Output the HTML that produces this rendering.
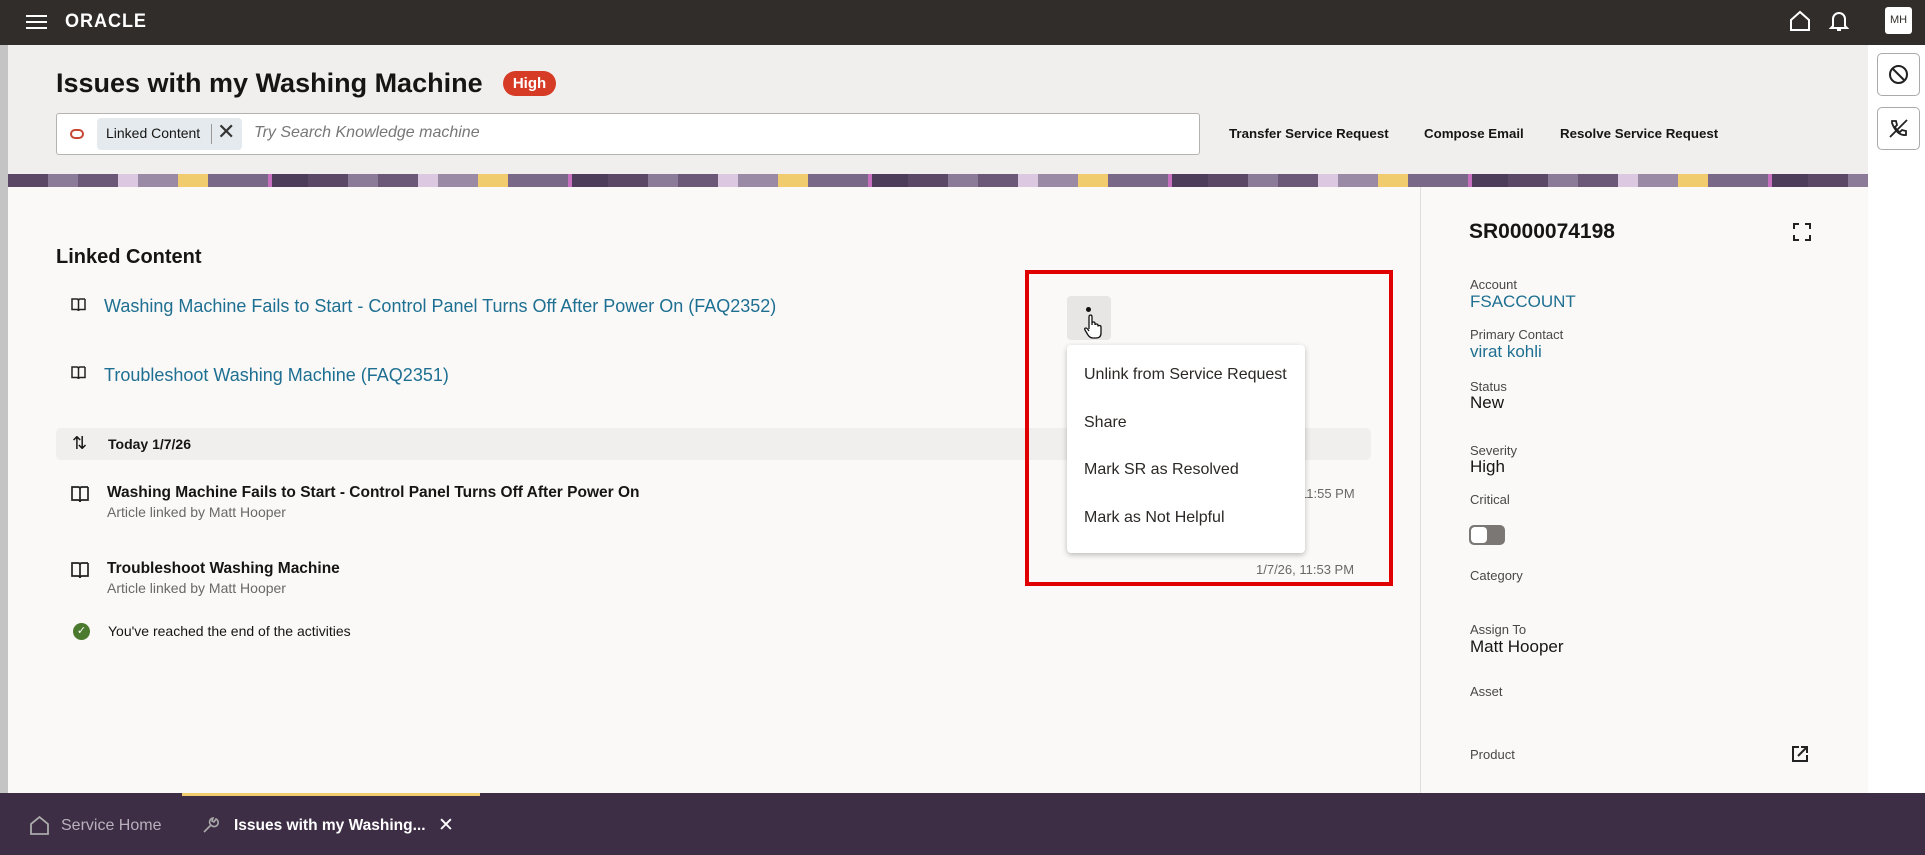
<!DOCTYPE html>
<html><head><meta charset="utf-8"><style>
*{box-sizing:border-box;margin:0;padding:0}
body{width:1925px;height:855px;overflow:hidden;font-family:"Liberation Sans",sans-serif;background:#faf9f8;position:relative;color:#161513}
.a{position:absolute;white-space:nowrap}
.top{left:0;top:0;width:1925px;height:45px;background:#312d2a}
.strip{left:0;top:45px;width:8px;height:810px;background:#c4c4c4}
.hdr{left:8px;top:45px;width:1860px;height:129px;background:#f1efed}
.rcol{left:1868px;top:45px;width:57px;height:748px;background:#fff}
.banner{left:8px;top:174px;width:1860px;height:13px;background:repeating-linear-gradient(90deg,#5b4866 0 40px,#8b7b98 40px 70px,#6b5878 70px 110px,#dcc8e0 110px 130px,#9a8aa6 130px 170px,#f0cc6e 170px 200px,#7a6888 200px 260px,#c870c0 260px 264px,#4e3d5a 264px 300px)}
.bot{left:0;top:793px;width:1925px;height:62px;background:#3d2e45}
.lbl{font-size:13px;color:#4a4744}
.val{font-size:17px}
.lnk{color:#1e6f91}
.mi{left:1084px;font-size:16px;color:#2b2826}
.sub{font-size:14px;color:#6b6865}
.ts{font-size:13px;color:#6b6865}
.act{font-size:13.3px;font-weight:bold;top:126px}
</style></head><body>
<div class="a top"></div>
<div class="a strip"></div>
<div class="a" style="left:26px;top:15px;width:21px;height:2px;background:#fff;box-shadow:0 6px 0 #fff,0 12px 0 #fff"></div>
<div class="a" style="left:65px;top:11px;color:#fff;font-size:19px;letter-spacing:1px;font-weight:bold;transform:scaleX(0.95);transform-origin:left">ORACLE</div>
<svg class="a" style="left:1789px;top:10px" width="22" height="22" viewBox="0 0 22 22"><path d="M2 10L11 2L20 10V20H2Z" fill="none" stroke="#fff" stroke-width="2"/></svg>
<svg class="a" style="left:1829px;top:9px" width="20" height="24" viewBox="0 0 20 24"><path d="M4 17V10A6 6 0 0 1 16 10V17L18 19H2Z M8 21H12" fill="none" stroke="#fff" stroke-width="2"/></svg>
<div class="a" style="left:1885px;top:7px;width:27px;height:27px;background:#fff;border-radius:3px;font-size:11px;text-align:center;line-height:27px;color:#312d2a">MH</div>

<div class="a hdr"></div>
<div class="a rcol"></div>
<div class="a" style="left:1877px;top:53px;width:43px;height:43px;border:1px solid #aaa;border-radius:5px;background:#fff"></div>
<svg class="a" style="left:1887px;top:63px" width="23" height="23" viewBox="0 0 23 23"><circle cx="11.5" cy="11.5" r="8.5" fill="none" stroke="#222" stroke-width="2"/><path d="M5.5 5.5L17.5 17.5" stroke="#222" stroke-width="2"/></svg>
<div class="a" style="left:1877px;top:107px;width:43px;height:43px;border:1px solid #aaa;border-radius:5px;background:#fff"></div>
<svg class="a" style="left:1887px;top:117px" width="23" height="23" viewBox="0 0 23 23"><path d="M5 4L9 4L10 8L8 10Q10 14 13 15L15 13L19 14V18Q10 19 5 6Z" fill="none" stroke="#222" stroke-width="1.8"/><path d="M3 20L20 3" stroke="#222" stroke-width="1.8"/></svg>

<div class="a" style="left:56px;top:68px;font-size:27px;font-weight:bold">Issues with my Washing Machine</div>
<div class="a" style="left:503px;top:71px;width:53px;height:25px;background:#d63b25;color:#fff;border-radius:13px;font-size:15px;font-weight:bold;text-align:center;line-height:25px">High</div>
<div class="a" style="left:56px;top:113px;width:1144px;height:42px;background:#fff;border:1px solid #b5b3b0;border-radius:3px"></div>
<div class="a" style="left:70px;top:129px;width:14px;height:10px;border:2px solid #c74634;border-radius:5px"></div>
<div class="a" style="left:97px;top:118px;width:145px;height:32px;background:#e4eaed;border-radius:4px"></div>
<div class="a" style="left:106px;top:125px;font-size:14px">Linked Content</div>
<div class="a" style="left:211px;top:124px;width:1px;height:20px;background:#999"></div>
<div class="a" style="left:217px;top:119px;font-size:22px;color:#333">✕</div>
<div class="a" style="left:254px;top:124px;font-size:16px;font-style:italic;color:#777">Try Search Knowledge machine</div>
<div class="a act" style="left:1229px">Transfer Service Request</div>
<div class="a act" style="left:1424px">Compose Email</div>
<div class="a act" style="left:1560px">Resolve Service Request</div>

<div class="a banner"></div>

<div class="a" style="left:1420px;top:187px;width:1px;height:606px;background:#e0dedb"></div>
<div class="a" style="left:56px;top:246px;font-size:20px;font-weight:bold">Linked Content</div>
<svg class="a" style="left:71px;top:298px" width="15" height="14" viewBox="0 0 15 14"><path d="M1 1H6Q7.5 1 7.5 3V13Q7.5 11.5 6 11.5H1ZM14 1H9Q7.5 1 7.5 3M14 1V11.5H9Q7.5 11.5 7.5 13" fill="none" stroke="#222" stroke-width="1.5"/></svg>
<div class="a lnk" style="left:104px;top:296px;font-size:18px">Washing Machine Fails to Start - Control Panel Turns Off After Power On (FAQ2352)</div>
<svg class="a" style="left:71px;top:366px" width="15" height="14" viewBox="0 0 15 14"><path d="M1 1H6Q7.5 1 7.5 3V13Q7.5 11.5 6 11.5H1ZM14 1H9Q7.5 1 7.5 3M14 1V11.5H9Q7.5 11.5 7.5 13" fill="none" stroke="#222" stroke-width="1.5"/></svg>
<div class="a lnk" style="left:104px;top:365px;font-size:18px">Troubleshoot Washing Machine (FAQ2351)</div>

<div class="a" style="left:56px;top:428px;width:1315px;height:32px;background:#f0efed;border-radius:5px"></div>
<div class="a" style="left:72px;top:433px;font-size:18px">⇅</div>
<div class="a" style="left:108px;top:436px;font-size:14px;font-weight:bold">Today 1/7/26</div>

<svg class="a" style="left:71px;top:486px" width="18" height="17" viewBox="0 0 18 17"><path d="M1 1H7Q9 1 9 3V16Q9 14 7 14H1ZM17 1H11Q9 1 9 3M17 1V14H11Q9 14 9 16" fill="none" stroke="#222" stroke-width="1.7"/></svg>
<div class="a" style="left:107px;top:484px;font-size:15.5px;font-weight:bold">Washing Machine Fails to Start - Control Panel Turns Off After Power On</div>
<div class="a sub" style="left:107px;top:504px">Article linked by Matt Hooper</div>
<div class="a ts" style="left:1300px;top:486px">11:55 PM</div>
<svg class="a" style="left:71px;top:562px" width="18" height="17" viewBox="0 0 18 17"><path d="M1 1H7Q9 1 9 3V16Q9 14 7 14H1ZM17 1H11Q9 1 9 3M17 1V14H11Q9 14 9 16" fill="none" stroke="#222" stroke-width="1.7"/></svg>
<div class="a" style="left:107px;top:560px;font-size:15.5px;font-weight:bold">Troubleshoot Washing Machine</div>
<div class="a sub" style="left:107px;top:580px">Article linked by Matt Hooper</div>
<div class="a ts" style="left:1256px;top:562px">1/7/26, 11:53 PM</div>
<div class="a" style="left:73px;top:623px;width:17px;height:17px;border-radius:50%;background:#4b7a2e;color:#fff;font-size:11px;text-align:center;line-height:17px">✓</div>
<div class="a" style="left:108px;top:623px;font-size:14px">You've reached the end of the activities</div>

<div class="a" style="left:1067px;top:296px;width:44px;height:44px;background:#e8e6e4;border-radius:4px"></div>
<div class="a" style="left:1086px;top:307px;width:5px;height:5px;border-radius:50%;background:#111"></div>
<svg class="a" style="left:1083px;top:314px" width="22" height="26" viewBox="0 0 22 26"><path d="M6 15V3Q6 1 7.5 1Q9 1 9 3V11V9Q9 8 10.5 8Q12 8 12 9.5V11Q12 10 13.5 10Q15 10 15 11.5V12.5Q15 11.5 16.5 11.5Q18 11.5 18 13V19Q18 24 13 24H10Q7 24 5 21L2 16Q1 14 3 14Q4 14 6 17" fill="#fff" stroke="#111" stroke-width="1.3"/></svg>
<div class="a" style="left:1067px;top:345px;width:238px;height:208px;background:#fff;border-radius:4px;box-shadow:0 2px 6px rgba(0,0,0,.25)"></div>
<div class="a mi" style="top:366px">Unlink from Service Request</div>
<div class="a mi" style="top:414px">Share</div>
<div class="a mi" style="top:461px">Mark SR as Resolved</div>
<div class="a mi" style="top:509px">Mark as Not Helpful</div>
<div class="a" style="left:1025px;top:270px;width:368px;height:316px;border:4px solid #e10000"></div>

<div class="a" style="left:1469px;top:220px;font-size:21px;font-weight:bold">SR0000074198</div>
<svg class="a" style="left:1793px;top:223px" width="18" height="18" viewBox="0 0 18 18"><path d="M1 6V1H6M12 1H17V6M17 12V17H12M6 17H1V12" fill="none" stroke="#222" stroke-width="2"/></svg>
<div class="a lbl" style="left:1470px;top:277px">Account</div>
<div class="a val lnk" style="left:1470px;top:292px">FSACCOUNT</div>
<div class="a lbl" style="left:1470px;top:327px">Primary Contact</div>
<div class="a val lnk" style="left:1470px;top:342px">virat kohli</div>
<div class="a lbl" style="left:1470px;top:379px">Status</div>
<div class="a val" style="left:1470px;top:393px">New</div>
<div class="a lbl" style="left:1470px;top:443px">Severity</div>
<div class="a val" style="left:1470px;top:457px">High</div>
<div class="a lbl" style="left:1470px;top:492px">Critical</div>
<div class="a" style="left:1469px;top:525px;width:36px;height:20px;border-radius:5px;background:#7a7775"></div>
<div class="a" style="left:1471px;top:527px;width:16px;height:16px;border-radius:4px;background:#fff"></div>
<div class="a lbl" style="left:1470px;top:568px">Category</div>
<div class="a lbl" style="left:1470px;top:622px">Assign To</div>
<div class="a val" style="left:1470px;top:637px">Matt Hooper</div>
<div class="a lbl" style="left:1470px;top:684px">Asset</div>
<div class="a lbl" style="left:1470px;top:747px">Product</div>
<svg class="a" style="left:1791px;top:745px" width="18" height="18" viewBox="0 0 18 18"><path d="M8 2H2V16H16V10M10 2H16V8M16 2L7 11" fill="none" stroke="#222" stroke-width="2"/></svg>

<div class="a bot"></div>
<div class="a" style="left:182px;top:793px;width:298px;height:3px;background:#f0cc6e"></div>
<svg class="a" style="left:29px;top:815px" width="21" height="21" viewBox="0 0 21 21"><path d="M2 9L10.5 2L19 9V19H2Z" fill="none" stroke="#aaa" stroke-width="1.8"/></svg>
<div class="a" style="left:61px;top:817px;font-size:16px;color:#b8b0bc">Service Home</div>
<svg class="a" style="left:201px;top:815px" width="20" height="20" viewBox="0 0 20 20"><path d="M3 17L10 10M10 10A4 4 0 1 0 15 4L13 7L11 6L12 3A4 4 0 0 0 10 10" fill="none" stroke="#aaa" stroke-width="1.6"/></svg>
<div class="a" style="left:234px;top:817px;font-size:15.5px;color:#fff;font-weight:bold">Issues with my Washing...</div>
<div class="a" style="left:438px;top:814px;font-size:19px;color:#fff">✕</div>
</body></html>
